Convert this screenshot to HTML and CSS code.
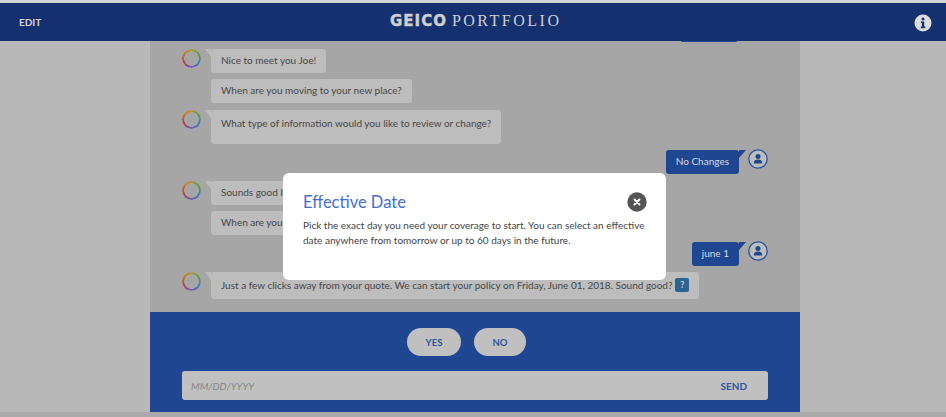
FILE: index.html
```html
<!DOCTYPE html>
<html lang="en">
<head>
  <meta charset="UTF-8" />
  <meta name="viewport" content="width=device-width, initial-scale=1.0" />
  <title>GEICO Portfolio</title>
  <link rel="stylesheet" href="styles.css">
</head>

<body>
  <header class="top-bar">
    <a class="edit-link">EDIT</a>
    <div class="brand">
      <span class="brand-geico">GEICO</span>
      <span class="brand-portfolio">PORTFOLIO</span>
    </div>
    <svg class="info-icon" viewBox="0 0 18 18" width="18" height="18">
      <circle cx="9" cy="9" r="8.5" fill="#dcdcdc" />
      <circle cx="9" cy="4.9" r="1.5" fill="#14306f" />
      <path d="M6.8 7.4h3.4v5.2h1.1v1.6H6.8v-1.6h1.1V9H6.8z" fill="#14306f" />
    </svg>
  </header>

  <main class="chat-column">
    <section class="messages">
      <div class="row user row-clipped">
        <div class="bubble bubble-user bubble-clipped"></div>
      </div>

      <div class="row">
        <span class="ring"></span>
        <div class="bubble bubble-bot">Nice to meet you Joe!</div>
      </div>
      <div class="row row-follow">
        <div class="bubble">When are you moving to your new place?</div>
      </div>
      <div class="row">
        <span class="ring"></span>
        <div class="bubble bubble-bot bubble-tall">What type of information would you like to review or change?</div>
      </div>

      <div class="row user">
        <div class="bubble bubble-user">No Changes</div>
        <svg class="user-icon" viewBox="0 0 20 20" width="20" height="20">
          <circle cx="10" cy="10" r="9.2" fill="#bdbdbd" stroke="#2a54a3" stroke-width="1.3" />
          <circle cx="10" cy="7.6" r="2.5" fill="#1f4690" />
          <path d="M5.8 14.4c0-2.8 1.6-3.8 4.2-3.8s4.2 1 4.2 3.8z" fill="#1f4690" />
        </svg>
      </div>

      <div class="row">
        <span class="ring"></span>
        <div class="bubble bubble-bot">Sounds good I got that.</div>
      </div>
      <div class="row row-follow">
        <div class="bubble">When are you moving to your new place?</div>
      </div>

      <div class="row user">
        <div class="bubble bubble-user">june 1</div>
        <svg class="user-icon" viewBox="0 0 20 20" width="20" height="20">
          <circle cx="10" cy="10" r="9.2" fill="#bdbdbd" stroke="#2a54a3" stroke-width="1.3" />
          <circle cx="10" cy="7.6" r="2.5" fill="#1f4690" />
          <path d="M5.8 14.4c0-2.8 1.6-3.8 4.2-3.8s4.2 1 4.2 3.8z" fill="#1f4690" />
        </svg>
      </div>

      <div class="row">
        <span class="ring"></span>
        <div class="bubble bubble-bot bubble-help">
          Just a few clicks away from your quote. We can start your policy on Friday, June 01, 2018. Sound good?
          <span class="help-badge">?</span>
        </div>
      </div>
    </section>

    <section class="answer-panel">
      <div class="quick-replies">
        <button class="pill pill-yes">YES</button>
        <button class="pill pill-no">NO</button>
      </div>
      <div class="date-input">
        <span class="placeholder">MM/DD/YYYY</span>
        <button class="send-button">SEND</button>
      </div>
    </section>
  </main>

  <div class="bottom-line"></div>

  <div class="modal">
    <h2 class="modal-title">Effective Date</h2>
    <p class="modal-text">Pick the exact day you need your coverage to start. You can select an effective date anywhere from tomorrow or up to 60 days in the future.</p>
    <button class="modal-close">
      <svg viewBox="0 0 20 20" width="20" height="20">
        <circle cx="10" cy="10" r="9.7" fill="#555" />
        <path d="M7.5 7.5l5 5M12.5 7.5l-5 5" stroke="#fff" stroke-width="2" stroke-linecap="round" />
      </svg>
    </button>
  </div>
</body>
</html>
```

FILE: styles.css
```css
* {
  box-sizing: border-box;
}

html,
body {
  height: 100%;
}

body {
  margin: 0;
  display: flex;
  flex-direction: column;
  overflow: hidden;
  background: #b8b8b8;
  color: #474747;
  font-family: "Lato", "Liberation Sans", sans-serif;
  font-size: 10px;
}

.top-bar {
  flex: none;
  height: 41px;
  padding: 0 14px 0 19px;
  display: flex;
  align-items: center;
  justify-content: space-between;
  position: relative;
  background: #14306f;
  border-top: 3px solid #d4d4d4;
}

.edit-link {
  color: #d6d6d6;
  font-size: 10px;
  font-weight: 700;
}

.brand {
  position: absolute;
  left: 390px;
  top: 9px;
  display: flex;
  align-items: center;
  gap: 5px;
  color: #cfcfcf;
  white-space: nowrap;
}

.brand-geico {
  font-family: "DejaVu Sans", sans-serif;
  font-size: 15px;
  font-weight: 700;
  letter-spacing: 1px;
  line-height: 18px;
  -webkit-text-stroke: 0.4px #cfcfcf;
}

.brand-portfolio {
  font-family: "Liberation Serif", serif;
  font-size: 16px;
  letter-spacing: 2.5px;
  line-height: 18px;
}

.info-icon {
  display: block;
  margin-top: 2px;
}

.chat-column {
  flex: 1;
  min-height: 0;
  width: 650px;
  margin-left: 150px;
  display: flex;
  flex-direction: column;
  background: #a6a6a6;
}

.messages {
  flex: 1;
  min-height: 0;
  padding: 0 32px;
  display: flex;
  flex-direction: column;
  gap: 6.5px;
  overflow: hidden;
}

.row {
  display: flex;
  align-items: flex-start;
  gap: 9px;
}

.row-follow {
  padding-left: 29px;
}

.row-clipped {
  margin-top: -23px;
  padding-right: 30px;
}

.user {
  justify-content: flex-end;
}

.ring {
  flex: none;
  width: 19px;
  height: 19px;
  margin-right: 1px;
  border-radius: 50%;
  background: conic-gradient(#b59a30 0deg, #5a9e42 60deg, #3580c4 120deg, #7a54b8 185deg, #bb463c 250deg, #cf7a24 315deg, #b59a30 360deg);
  -webkit-mask: radial-gradient(circle, transparent 7.1px, #000 7.6px);
  mask: radial-gradient(circle, transparent 7.1px, #000 7.6px);
}

.bubble {
  position: relative;
  height: 24px;
  padding: 0 10px;
  line-height: 23px;
  background: #bdbdbd;
  border-radius: 3px;
  white-space: nowrap;
}

.bubble-bot::before {
  content: "";
  position: absolute;
  left: -6px;
  top: 0;
  border-top: 8px solid #bdbdbd;
  border-left: 6px solid transparent;
}

.bubble-tall {
  height: 34px;
  line-height: 27px;
}

.bubble-help {
  height: 27px;
  padding-bottom: 1px;
  display: flex;
  align-items: center;
  gap: 3px;
}

.help-badge {
  width: 14px;
  height: 14px;
  background: #2c6390;
  border-radius: 2px;
  color: #c8d4de;
  font-size: 9px;
  font-weight: 700;
  line-height: 14px;
  text-align: center;
}

.bubble-user {
  background: #1f4690;
  color: #d4d9e4;
}

.bubble-user::after {
  content: "";
  position: absolute;
  right: -7px;
  top: 0;
  border-top: 8px solid #1f4690;
  border-right: 7px solid transparent;
}

.bubble-clipped {
  width: 58px;
}

.user-icon {
  flex: none;
  display: block;
  margin-top: -1px;
}

.answer-panel {
  flex: none;
  height: 100px;
  padding: 16px 32px 0;
  background: #1f4690;
}

.quick-replies {
  display: flex;
  justify-content: center;
  gap: 13px;
  margin: 0 17px 15px 0;
}

.pill {
  height: 28px;
  padding: 0;
  border: none;
  border-radius: 14px;
  background: #c0c0c0;
  color: #2f55a0;
  font-family: inherit;
  font-size: 9.5px;
  font-weight: 700;
}

.pill-yes {
  width: 54px;
}

.pill-no {
  width: 52px;
}

.date-input {
  height: 29px;
  padding: 0 21px 0 9px;
  display: flex;
  align-items: center;
  justify-content: space-between;
  background: #c0c0c0;
  border-radius: 3px;
}

.placeholder {
  color: #868686;
  font-style: italic;
}

.send-button {
  padding: 0;
  border: none;
  background: none;
  color: #2f55a0;
  font-family: inherit;
  font-size: 10px;
  font-weight: 700;
}

.bottom-line {
  flex: none;
  height: 5px;
  background: #aaa;
}

.modal {
  position: absolute;
  left: 283px;
  top: 173px;
  width: 383px;
  height: 107px;
  padding: 18px 20px 0;
  background: #fff;
  border-radius: 6px;
}

.modal-title {
  margin: 0 0 5px;
  color: #3f6fd0;
  font-size: 16.5px;
  font-weight: 400;
  line-height: 22px;
}

.modal-text {
  margin: 0;
  color: #444;
  font-size: 10px;
  line-height: 15px;
}

.modal-close {
  position: absolute;
  top: 19px;
  right: 19px;
  width: 20px;
  height: 20px;
  padding: 0;
  border: none;
  background: none;
}

.modal-close svg {
  display: block;
}
```
